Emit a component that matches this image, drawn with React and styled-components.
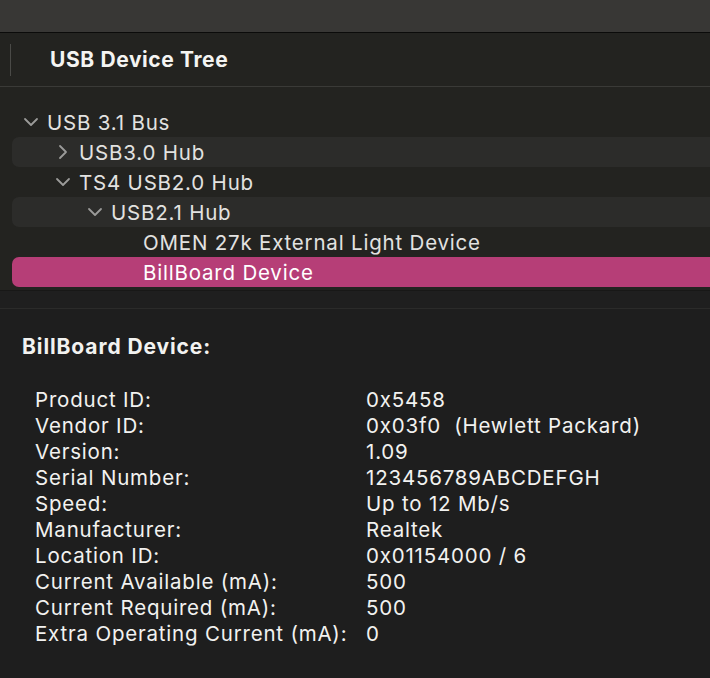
import styled, { createGlobalStyle } from "styled-components";

const GlobalStyle = createGlobalStyle`
  html, body {
    margin: 0;
    padding: 0;
    background: #1e1e1e;
  }
  body {
    font-family: Inter, "Noto Sans", sans-serif;
    -webkit-font-smoothing: antialiased;
  }
`;

const tree = [
  { label: "USB 3.1 Bus", depth: 0, chevron: "down" },
  { label: "USB3.0 Hub", depth: 1, chevron: "right" },
  { label: "TS4 USB2.0 Hub", depth: 1, chevron: "down" },
  { label: "USB2.1 Hub", depth: 2, chevron: "down" },
  { label: "OMEN 27k External Light Device", depth: 3 },
  { label: "BillBoard Device", depth: 3, selected: true },
];

const details = [
  ["Product ID:", "0x5458"],
  ["Vendor ID:", "0x03f0  (Hewlett Packard)"],
  ["Version:", "1.09"],
  ["Serial Number:", "123456789ABCDEFGH"],
  ["Speed:", "Up to 12 Mb/s"],
  ["Manufacturer:", "Realtek"],
  ["Location ID:", "0x01154000 / 6"],
  ["Current Available (mA):", "500"],
  ["Current Required (mA):", "500"],
  ["Extra Operating Current (mA):", "0"],
];

const Chevron = ({ dir }) => (
  <ChevronBox>
    {dir === "down" ? (
      <svg width="16" height="16" viewBox="0 0 16 16">
        <path d="M2 5 L8 11 L14 5" fill="none" stroke="#9b9b99" strokeWidth="1.8" strokeLinecap="round" strokeLinejoin="round" />
      </svg>
    ) : dir === "right" ? (
      <svg width="16" height="16" viewBox="0 0 16 16">
        <path d="M5 2 L11 8 L5 14" fill="none" stroke="#9b9b99" strokeWidth="1.8" strokeLinecap="round" strokeLinejoin="round" />
      </svg>
    ) : null}
  </ChevronBox>
);

const App = () => {
  return (
    <Window>
      <GlobalStyle />
      <TitleBar />
      <Header>
        <Divider />
        <HeaderTitle>USB Device Tree</HeaderTitle>
      </Header>
      <TreePane>
        {tree.map((row, i) => (
          <TreeRow key={row.label} $depth={row.depth} $striped={i % 2 === 1} $selected={row.selected}>
            <Chevron dir={row.chevron} />
            <RowLabel $selected={row.selected}>{row.label}</RowLabel>
          </TreeRow>
        ))}
      </TreePane>
      <Splitter />
      <DetailPane>
        <DetailTitle>BillBoard Device:</DetailTitle>
        <DetailGrid>
          {details.map(([k, v]) => (
            <DetailRow key={k}>
              <DetailKey>{k}</DetailKey>
              <DetailValue>{v}</DetailValue>
            </DetailRow>
          ))}
        </DetailGrid>
      </DetailPane>
    </Window>
  );
};

const Window = styled.div`
  width: 710px;
  height: 678px;
  overflow: hidden;
  display: flex;
  flex-direction: column;
  background: #1e1e1e;
`;

const TitleBar = styled.div`
  height: 32px;
  flex: none;
  background: #383735;
  border-bottom: 1px solid #0b0b0a;
`;

const Header = styled.div`
  height: 53px;
  flex: none;
  display: flex;
  align-items: center;
  background: #232320;
  border-bottom: 1px solid #3a3a37;
`;

const Divider = styled.div`
  width: 1px;
  height: 32px;
  margin-left: 10px;
  background: #4a4a47;
`;

const HeaderTitle = styled.h1`
  margin: 0 0 0 39px;
  font-size: 21px;
  font-weight: 700;
  color: #f4f4f2;
  letter-spacing: 0.6px;
`;

const TreePane = styled.div`
  flex: none;
  height: 204px;
  padding-top: 20px;
  box-sizing: border-box;
  background: #232320;
  border-bottom: 1px solid #181817;
`;

const TreeRow = styled.div`
  height: 30px;
  margin-left: 12px;
  display: flex;
  align-items: center;
  padding-left: ${(p) => 3 + p.$depth * 32}px;
  border-radius: 7px 0 0 7px;
  background: ${(p) =>
    p.$selected ? "#b63e77" : p.$striped ? "#2c2c2a" : "transparent"};
`;

const ChevronBox = styled.span`
  width: 32px;
  height: 30px;
  display: flex;
  align-items: center;
  justify-content: center;
  flex: none;
`;

const RowLabel = styled.span`
  font-size: 20.5px;
  color: ${(p) => (p.$selected ? "#ffffff" : "#e2e2e0")};
  white-space: nowrap;
  letter-spacing: 0.8px;
`;

const Splitter = styled.div`
  height: 17px;
  flex: none;
  background: #1f1f1f;
  border-bottom: 1px solid #2b2b2a;
`;

const DetailPane = styled.div`
  flex: 1;
  background: #1e1e1e;
  padding: 26px 0 0 22px;
  color: #f2f2f0;
`;

const DetailTitle = styled.h2`
  margin: 0;
  font-size: 21px;
  font-weight: 700;
  line-height: 24px;
  letter-spacing: 0.9px;
`;

const DetailGrid = styled.div`
  margin-top: 27px;
  padding-left: 13px;
  display: flex;
  flex-direction: column;
`;

const DetailRow = styled.div`
  display: grid;
  grid-template-columns: 331px auto;
  height: 26px;
  align-items: center;
  font-size: 20.5px;
  letter-spacing: 0.8px;
`;

const DetailKey = styled.span`
  white-space: nowrap;
`;

const DetailValue = styled.span`
  white-space: pre;
`;

export default App;
